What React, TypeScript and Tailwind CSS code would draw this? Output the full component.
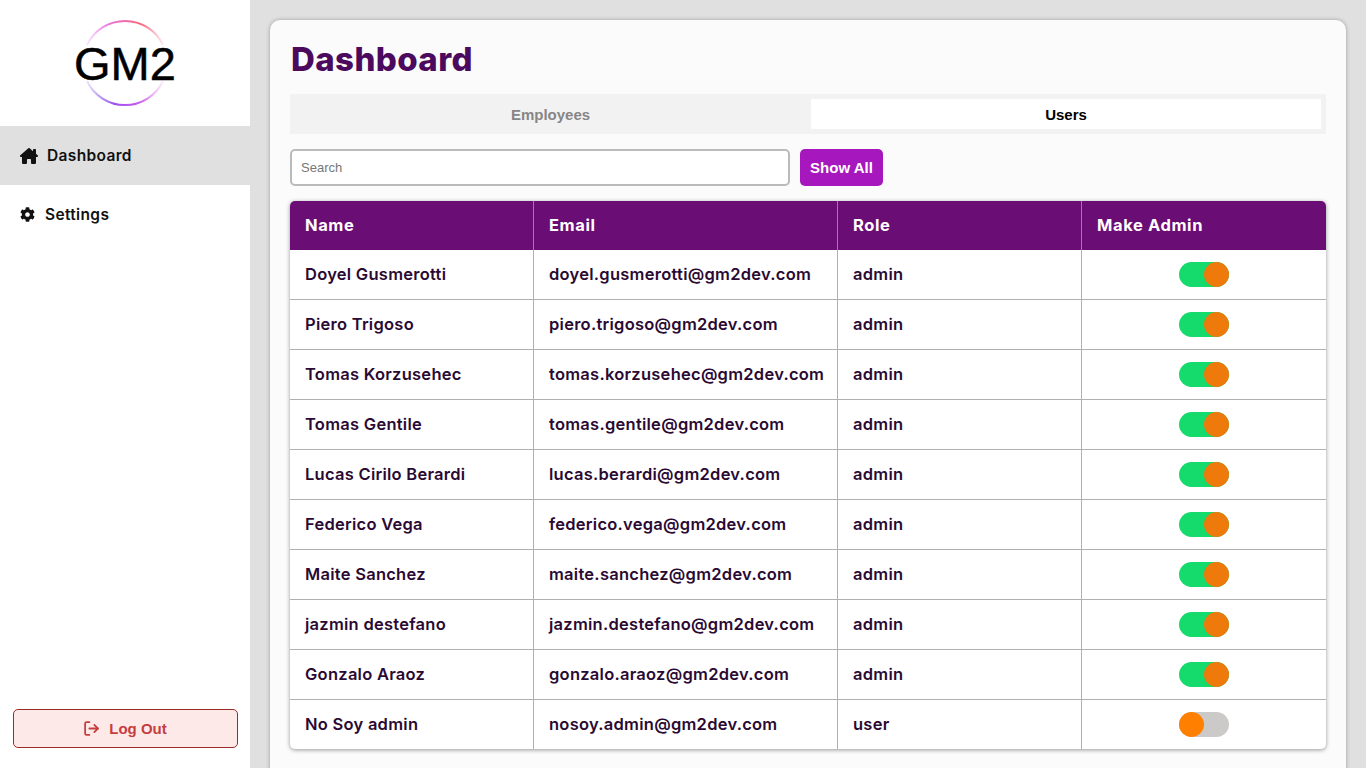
import { FaCog } from 'react-icons/fa'
import { FaHouseChimney } from 'react-icons/fa6'
import { LogOut } from 'lucide-react'

const users = [
  { name: 'Doyel Gusmerotti', email: 'doyel.gusmerotti@gm2dev.com', role: 'admin' },
  { name: 'Piero Trigoso', email: 'piero.trigoso@gm2dev.com', role: 'admin' },
  { name: 'Tomas Korzusehec', email: 'tomas.korzusehec@gm2dev.com', role: 'admin' },
  { name: 'Tomas Gentile', email: 'tomas.gentile@gm2dev.com', role: 'admin' },
  { name: 'Lucas Cirilo Berardi', email: 'lucas.berardi@gm2dev.com', role: 'admin' },
  { name: 'Federico Vega', email: 'federico.vega@gm2dev.com', role: 'admin' },
  { name: 'Maite Sanchez', email: 'maite.sanchez@gm2dev.com', role: 'admin' },
  { name: 'jazmin destefano', email: 'jazmin.destefano@gm2dev.com', role: 'admin' },
  { name: 'Gonzalo Araoz', email: 'gonzalo.araoz@gm2dev.com', role: 'admin' },
  { name: 'No Soy admin', email: 'nosoy.admin@gm2dev.com', role: 'user' },
]

function Logo() {
  return (
    <div className="relative w-[106px] h-[86px] flex items-center justify-center">
      <svg className="absolute left-[8px] top-[-2px]" width="90" height="90" viewBox="0 0 90 90" fill="none">
        <defs>
          <linearGradient id="ringTop" gradientUnits="userSpaceOnUse" x1="7" y1="0" x2="83" y2="0">
            <stop offset="0" stopColor="#e77cf0" stopOpacity="0.2" />
            <stop offset="0.3" stopColor="#e874d8" />
            <stop offset="0.7" stopColor="#f8647c" />
            <stop offset="1" stopColor="#f8647c" stopOpacity="0.15" />
          </linearGradient>
          <linearGradient id="ringBottom" gradientUnits="userSpaceOnUse" x1="7" y1="0" x2="83" y2="0">
            <stop offset="0" stopColor="#7a4be8" stopOpacity="0.15" />
            <stop offset="0.35" stopColor="#9a50ee" />
            <stop offset="0.7" stopColor="#c95cf0" />
            <stop offset="1" stopColor="#e77cf0" stopOpacity="0.15" />
          </linearGradient>
        </defs>
        <path d="M7 27 A42 42 0 0 1 83 27" stroke="url(#ringTop)" strokeWidth="2" />
        <path d="M7 63 A42 42 0 0 0 83 63" stroke="url(#ringBottom)" strokeWidth="2" />
      </svg>
      <span className="relative font-['Liberation_Sans',sans-serif] text-[47px] leading-none text-black [-webkit-text-stroke:0.5px_black]">GM2</span>
    </div>
  )
}

function Toggle({ on }: { on: boolean }) {
  return on ? (
    <div className="mx-auto w-[50px] h-[25px] rounded-full bg-[#14db6b] flex justify-end">
      <div className="w-[25px] h-[25px] rounded-full bg-[#ee7a0c]" />
    </div>
  ) : (
    <div className="mx-auto w-[50px] h-[25px] rounded-full bg-[#ccc9c9] flex justify-start">
      <div className="w-[25px] h-[25px] rounded-full bg-[#ff8000]" />
    </div>
  )
}

export default function App() {
  return (
    <div className="flex h-screen overflow-hidden bg-[#e0e0e0] font-['Inter',sans-serif]">
      <aside className="w-[250px] shrink-0 bg-white flex flex-col">
        <div className="h-[126px] flex items-center justify-center">
          <Logo />
        </div>
        <div className="h-[59px] bg-[#e0e0e0] flex items-center pl-5 gap-[9px] text-[#111] text-[15.5px] tracking-[0.35px] font-semibold">
          <FaHouseChimney className="text-[18px]" />
          <span>Dashboard</span>
        </div>
        <div className="h-[59px] flex items-center pl-5 gap-[10px] text-[#111] text-[15.5px] tracking-[0.35px] font-semibold">
          <FaCog className="text-[15px]" />
          <span>Settings</span>
        </div>
        <div className="mt-auto px-[12.5px] pb-5">
          <button className="w-full h-[39px] rounded-[5px] border border-[#9b2c2c] bg-[#fee9e9] text-[#c53e3e] flex items-center justify-center gap-[9px] font-['Liberation_Sans',sans-serif] font-bold text-[15px]">
            <LogOut size={17} strokeWidth={2.5} className="-scale-x-100 rotate-180" />
            <span className="pt-[1px]">Log Out</span>
          </button>
        </div>
      </aside>
      <main className="flex-1 pt-5 px-5">
        <div className="h-[800px] bg-[#fbfbfb] rounded-t-[10px] shadow-[0_0_4px_rgba(0,0,0,0.3)] p-5">
          <h1 className="ml-[1px] text-[33px] tracking-[0.4px] leading-[38px] font-extrabold text-[#4b0a5e]">Dashboard</h1>
          <div className="mt-[16px] h-10 bg-[#f2f2f2] flex p-[5px] font-['Liberation_Sans',sans-serif] font-bold text-[15px]">
            <div className="w-[516px] pr-[5px] pt-[2px] flex items-center justify-center text-[#868686]">Employees</div>
            <div className="flex-1 pt-[2px] bg-white flex items-center justify-center text-black">Users</div>
          </div>
          <div className="mt-[15px] flex gap-[10px]">
            <input
              placeholder="Search"
              className="w-[500px] h-[37px] px-[9px] bg-white rounded-[5px] border-2 border-[#bbb] text-[13px] font-['Liberation_Sans',sans-serif] placeholder:text-[#777]"
            />
            <button className="w-[83px] h-[37px] pt-[1px] rounded-[5px] bg-[#a617bd] text-white font-['Liberation_Sans',sans-serif] font-bold text-[15px]">
              Show All
            </button>
          </div>
          <div className="mt-[15px] rounded-[5px] overflow-hidden shadow-[0_1px_4px_rgba(0,0,0,0.4)] bg-white">
            <table className="w-full table-fixed border-collapse text-[16.5px] tracking-[0.26px]">
              <colgroup>
                <col className="w-[243px]" />
                <col className="w-[304px]" />
                <col className="w-[244px]" />
                <col />
              </colgroup>
              <thead>
                <tr className="h-[49px] bg-[#6a0e76] text-white text-left tracking-[0.6px]">
                  <th className="pl-[15px] pb-[1px] font-bold border-r border-[#a974b0]">Name</th>
                  <th className="pl-[15.5px] pb-[1px] font-bold border-r border-[#a974b0]">Email</th>
                  <th className="pl-[15.5px] pb-[1px] font-bold border-r border-[#a974b0]">Role</th>
                  <th className="pl-[15.5px] pb-[1px] font-bold">Make Admin</th>
                </tr>
              </thead>
              <tbody className="text-[#2a0a33] font-semibold">
                {users.map((u, i) => (
                  <tr key={u.email} className={i === 0 ? 'h-[49px]' : 'h-[50px] border-t border-[#b0b0b0]'}>
                    <td className="pl-[15px] border-r border-[#b0b0b0] whitespace-nowrap">{u.name}</td>
                    <td className="pl-[15.5px] border-r border-[#b0b0b0] whitespace-nowrap">{u.email}</td>
                    <td className="pl-[15.5px] border-r border-[#b0b0b0]">{u.role}</td>
                    <td>
                      <Toggle on={u.role === 'admin'} />
                    </td>
                  </tr>
                ))}
              </tbody>
            </table>
          </div>
        </div>
      </main>
    </div>
  )
}
